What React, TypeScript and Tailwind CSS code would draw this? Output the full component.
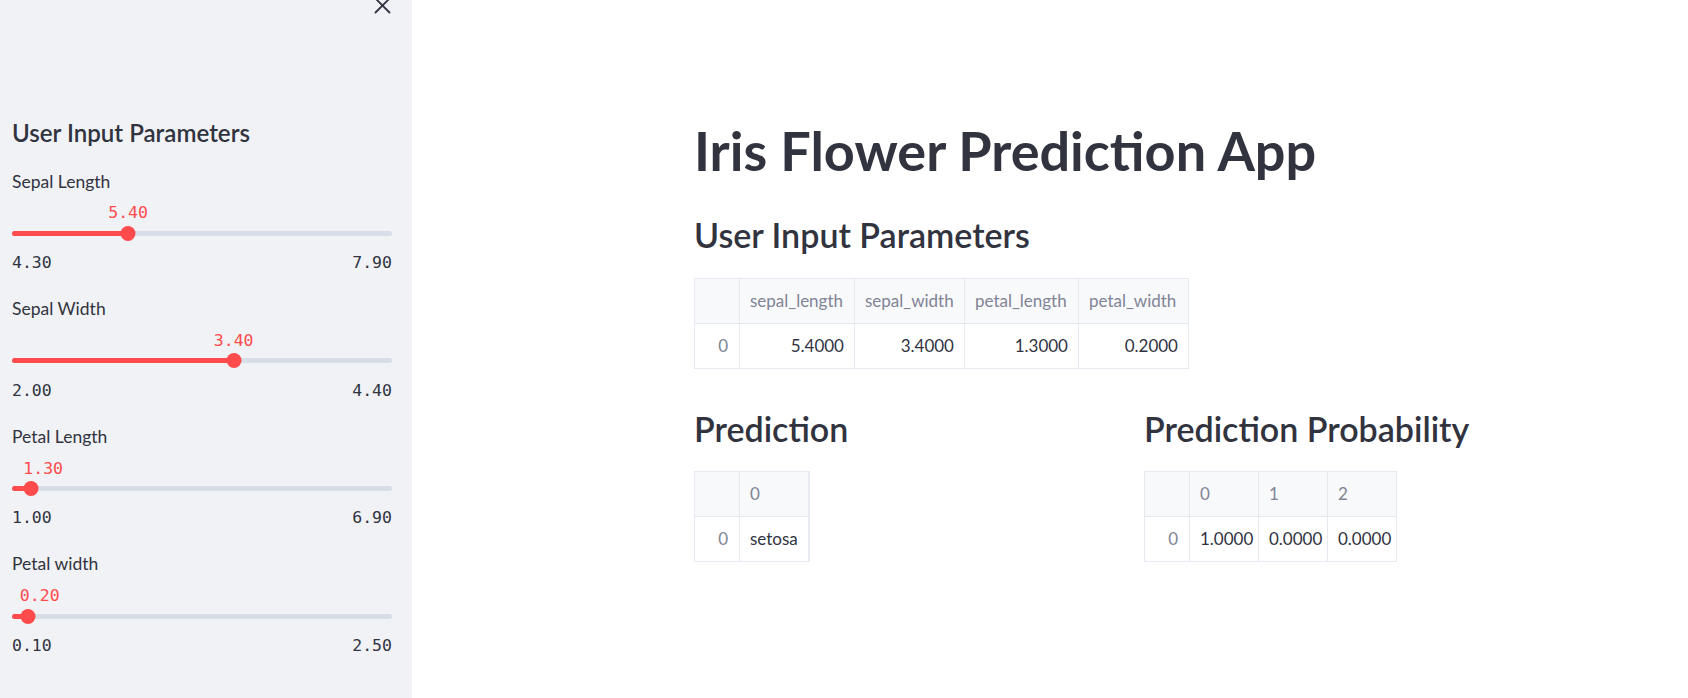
import * as React from "react";

type SliderSpec = { label: string; min: number; max: number; value: number };

const sliders: SliderSpec[] = [
  { label: "Sepal Length", min: 4.3, max: 7.9, value: 5.4 },
  { label: "Sepal Width", min: 2.0, max: 4.4, value: 3.4 },
  { label: "Petal Length", min: 1.0, max: 6.9, value: 1.3 },
  { label: "Petal width", min: 0.1, max: 2.5, value: 0.2 },
];

const Slider: React.FC<{ s: SliderSpec }> = ({ s }) => {
  const pct = ((s.value - s.min) / (s.max - s.min)) * 100;
  const nearEdge = pct < 10;
  return (
    <div className="mb-[26.1px]">
      <div className="text-[17.5px] leading-[21px] text-[#31333f]">{s.label}</div>

      {/* value above the thumb */}
      <div className="relative mt-[11.8px] h-[19px] font-['DejaVu_Sans_Mono',monospace] text-[16.5px] leading-[19px] text-[#ff4b4b]">
        <span
          className="absolute top-0 whitespace-nowrap"
          style={
            nearEdge
              ? { left: `calc(${pct}% - 8px)` }
              : { left: `${pct}%`, transform: "translateX(-50%)" }
          }
        >
          {s.value.toFixed(2)}
        </span>
      </div>

      {/* track */}
      <div className="relative mt-[3.3px] flex h-[15px] items-center">
        <div className="h-[5px] w-full rounded-full bg-[#d9dde7]" />
        <div
          className="absolute left-0 top-[5px] h-[5px] rounded-full bg-[#ff4b4b]"
          style={{ width: `${pct}%` }}
        />
        <div
          className="absolute top-0 h-[15px] w-[15px] -translate-x-1/2 rounded-full bg-[#ff4b4b]"
          style={{ left: `${pct}%` }}
        />
      </div>

      <div className="mt-[12.4px] flex h-[19px] justify-between font-['DejaVu_Sans_Mono',monospace] text-[16.5px] leading-[19px] text-[#31333f]">
        <span>{s.min.toFixed(2)}</span>
        <span>{s.max.toFixed(2)}</span>
      </div>
    </div>
  );
};

interface TableProps {
  cols: string[];
  widths: number[];
  values: string[];
  alignLeft?: boolean;
  thickRight?: boolean;
}

const DataTable: React.FC<TableProps> = ({ cols, widths, values, alignLeft, thickRight }) => (
  <table
    className={
      "table-fixed border-collapse border border-[#e6e9ef] text-[17px] leading-[21px] " +
      (thickRight ? "border-r-2" : "")
    }
    style={{ width: 45 + widths.reduce((a, b) => a + b, 0) }}
  >
    <thead>
      <tr className="h-[45px] bg-[#f8f9fb] text-[#808495]">
        <th className="w-[45px] border border-[#e6e9ef] font-normal" />
        {cols.map((c, i) => (
          <th
            key={c}
            className="whitespace-nowrap border border-[#e6e9ef] px-[10px] text-left font-normal"
            style={{ width: widths[i] }}
          >
            {c}
          </th>
        ))}
      </tr>
    </thead>
    <tbody>
      <tr className="h-[45px] bg-white text-[#31333f]">
        <td className="border border-[#e6e9ef] pr-[11px] text-right text-[#808495]">0</td>
        {values.map((v, i) => (
          <td
            key={i}
            className={
              "whitespace-nowrap border border-[#e6e9ef] px-[10px] " +
              (alignLeft ? "text-left" : "text-right")
            }
          >
            {v}
          </td>
        ))}
      </tr>
    </tbody>
  </table>
);

export default function App() {
  return (
    <div className="flex h-[698px] w-full overflow-hidden bg-white font-['Source_Sans_Pro',Lato,sans-serif] text-[#31333f]">
      {/* Sidebar */}
      <aside className="relative h-full w-[412px] shrink-0 bg-[#f0f2f6] pl-[12px] pr-[20px] pt-[118.3px]">
        <button className="absolute left-[374px] top-[-3px] text-[#31333f]">
          <svg width="17" height="17" viewBox="0 0 17 17" fill="none" stroke="currentColor" strokeWidth="1.8" strokeLinecap="round">
            <path d="M1.5 1.5 L15.5 15.5 M15.5 1.5 L1.5 15.5" />
          </svg>
        </button>

        <h2 className="mb-[22.4px] text-[24.1px] font-semibold leading-[30px]">User Input Parameters</h2>

        {sliders.map((s) => (
          <Slider key={s.label} s={s} />
        ))}
      </aside>

      {/* Main */}
      <main className="flex-1 pl-[282px] pt-[118.4px]">
        <h1 className="text-[54px] font-bold leading-[66px]">Iris Flower Prediction App</h1>

        <h3 className="mt-[29.4px] text-[34px] font-semibold leading-[42px]">User Input Parameters</h3>

        <div className="mt-[22.2px]">
          <DataTable
            cols={["sepal_length", "sepal_width", "petal_length", "petal_width"]}
            widths={[115, 110, 114, 110]}
            values={["5.4000", "3.4000", "1.3000", "0.2000"]}
          />
        </div>

        <div className="mt-[39.5px] grid w-[880px] grid-cols-2 gap-[20px]">
          <div>
            <h3 className="text-[34px] font-semibold leading-[42px]">Prediction</h3>
            <div className="mt-[20.5px]">
              <DataTable cols={["0"]} widths={[69]} values={["setosa"]} alignLeft thickRight />
            </div>
          </div>
          <div>
            <h3 className="text-[34px] font-semibold leading-[42px]">Prediction Probability</h3>
            <div className="mt-[20.5px]">
              <DataTable
                cols={["0", "1", "2"]}
                widths={[69, 69, 69]}
                values={["1.0000", "0.0000", "0.0000"]}
                alignLeft
              />
            </div>
          </div>
        </div>
      </main>
    </div>
  );
}
